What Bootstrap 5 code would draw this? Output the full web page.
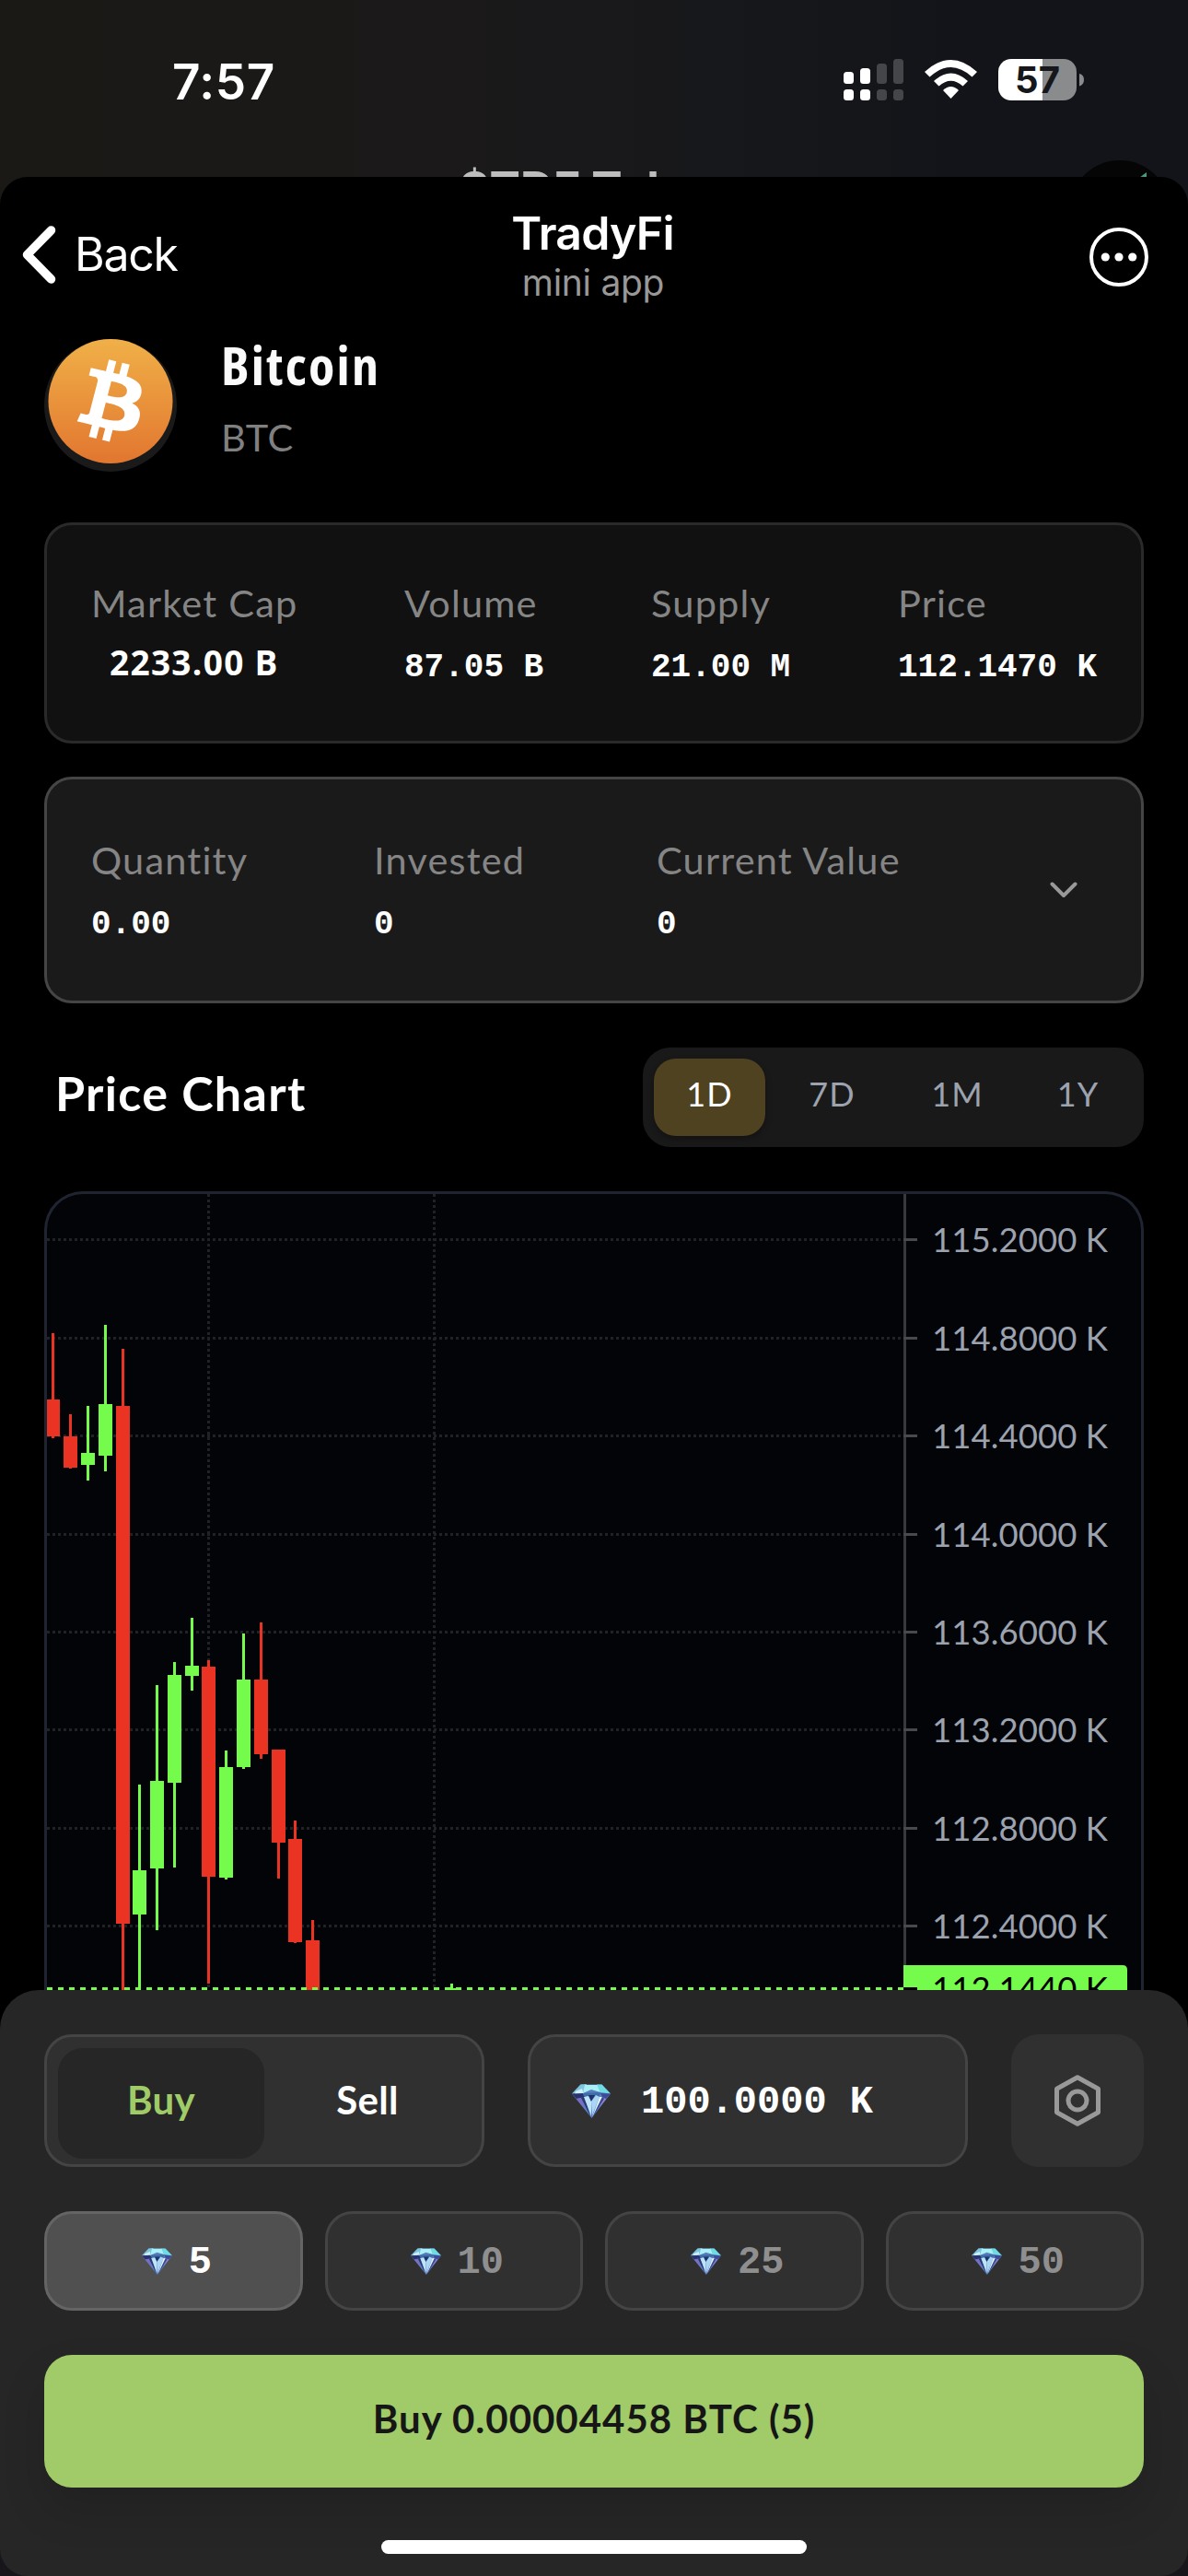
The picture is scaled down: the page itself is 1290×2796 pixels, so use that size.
<!DOCTYPE html>
<html lang="en" data-bs-theme="dark">
<head>
<meta charset="utf-8">
<meta name="viewport" content="width=device-width, initial-scale=1">
<title>TradyFi</title>
<link href="https://cdn.jsdelivr.net/npm/bootstrap@5.3.0/dist/css/bootstrap.min.css" rel="stylesheet">
<style>
  body { width: 1290px; height: 2796px; overflow: hidden; background: #000; color: #fff; font-family: Lato, "Open Sans", sans-serif; }
  svg { display: block; flex: none; }
  .sys { font-family: Inter, "Liberation Sans", sans-serif; }
  .mono { font-family: "Liberation Mono", monospace; font-weight: 700; white-space: pre; }

  .status-area { height: 222px; margin-bottom: -30px; padding: 64px 112px 0 187px; background: linear-gradient(90deg, #1a1916 0, #1b1917 22%, #1b191a 38%, #17181b 60%, #131419 82%, #121419 100%); }
  .clock { font-size: 53px; font-weight: 600; line-height: 52px; letter-spacing: .6px; margin-top: -1px; }
  .chat-peek { top: 181px; left: 0; right: 0; height: 12px; overflow: hidden; font-size: 50px; font-weight: 700; line-height: 46px; color: #bdbdbd; }
  .avatar-peek { left: 1161px; top: 174px; }

  .app-sheet { height: 1968px; background: #000; border-radius: 30px 30px 0 0; padding: 0 48px; }
  .app-header { height: 173px; margin: 0 -48px; }
  .back-btn { padding: 53px 0 0 23px; gap: 20px; width: 400px; font-size: 50px; line-height: 62px; letter-spacing: -1.3px; }
  .app-title { padding-top: 33px; font-size: 50px; font-weight: 600; line-height: 57px; letter-spacing: -.8px; margin-left: -3px; }
  .app-sub { font-size: 39px; line-height: 50px; letter-spacing: -.3px; color: #989898; margin-left: -2px; }
  .more-btn { width: 400px; padding: 55px 43px 0 0; }

  .coin-row { height: 202px; gap: 48px; }
  .coin-name { font-family: "Open Sans", sans-serif; font-stretch: 75%; font-size: 58px; font-weight: 700; line-height: 61px; letter-spacing: 2.2px; color: #fafafa; }
  .caption-lg { font-size: 41.5px; line-height: 52px; letter-spacing: 1.2px; color: #858585; }
  .coin-sym { margin-top: 22px; letter-spacing: .6px; color: #808080; }

  .panel { border: 3px solid #2a2a2a; border-radius: 30px; background: #111; padding: 58px 40px 0 48px; }
  .panel-stats { height: 240px; margin-bottom: 36px; }
  .panel-hold { height: 246px; margin-bottom: 48px; background: #1a1a1a; border-color: #454545; padding-top: 61px; }
  .stat-col { width: 268px; }
  .stat-col.first { width: 340px; }
  .hold-col { width: 307px; }
  .stat-val { font-size: 36px; line-height: 40px; margin-top: 25px; }
  .stat-cap { font-family: "Open Sans", sans-serif; font-size: 37px; font-weight: 700; letter-spacing: 1.3px; margin-top: 19px; padding-left: 20px; }

  .chart-head { height: 108px; margin-bottom: 48px; padding-left: 12px; }
  .chart-title { font-size: 52px; font-weight: 700; line-height: 60px; letter-spacing: 1.3px; margin: 0 0 10px; }
  .range-tabs { width: 544px; height: 108px; padding: 12px; border-radius: 30px; background: #191919; font-size: 36px; letter-spacing: 1px; color: #9ca3af; }
  .range-tab { height: 84px; line-height: 76px; }
  .range-tab.on { background: #4f4220; color: #fff; border-radius: 24px; box-shadow: 0 3px 6px rgba(0,0,0,.3); }

  .chart-box { height: 867px; border: 3px solid #1f2430; border-bottom: 0; border-radius: 42px 42px 0 0; background: #030408; overflow: hidden; }

  .trade-wrap { height: 636px; background: linear-gradient(#000 50%, #18161b 50%); }
  .trade-sheet { height: 636px; background: #262626; border-radius: 42px 42px 30px 30px; padding: 48px 48px 0; }
  .field { height: 144px; border: 3px solid #444; border-radius: 30px; background: #303030; }
  .side-switch { width: 478px; padding: 12px; font-size: 42px; font-weight: 700; margin-right: 47px; }
  .side-opt { height: 120px; line-height: 113px; border-radius: 27px; letter-spacing: .3px; }
  .side-opt.on { background: #262626; color: #a0cc68; }
  .amount { width: 478px; padding-left: 45px; gap: 33px; margin-right: 47px; font-size: 42px; }
  .amount span, .quick span { padding-top: 5px; }
  .gear { width: 144px; border: 0; }
  .quick-row { margin: 48px 0; gap: 24px; }
  .quick { flex: 1 1 0; height: 108px; border: 3px solid #444; border-radius: 30px; background: #303030; color: #8f8f8f; font-size: 42px; gap: 18px; padding-left: 7px; }
  .quick.on { background: #505050; border-color: #646464; color: #fff; }
  .buy-btn { height: 144px; border-radius: 30px; background: #a0cb68; color: #161616; font-size: 42px; font-weight: 700; letter-spacing: 1px; padding-bottom: 6px; box-shadow: 0 24px 48px rgba(0,0,0,.14); }
  .home-bar { width: 462px; height: 15px; border-radius: 8px; background: #fff; margin: 57px auto 0; }
</style>
<script src="https://cdn.jsdelivr.net/npm/bootstrap@5.3.0/dist/js/bootstrap.bundle.min.js"></script>
</head>
<body>

<svg width="0" height="0" class="position-absolute">
  <symbol id="gem" viewBox="0 0 42 37">
    <path d="M9.500 0.500 32.500 0.500 42 10.500 21.500 37 0 10.500Z" fill="#5a7fc0"/>
    <path d="M9.500.5 16 0 14 8 0 10.500Z" fill="#7fc6dc"/>
    <path d="M14 1 28 1 31 9 21 6 12 10Z" fill="#a9f0f5"/>
    <path d="M27 .5 32.500.5 42 10.500 31 9Z" fill="#6fdbe2"/>
    <path d="M4 8 11 5 13 11 3 11Z" fill="#cdeefa"/>
    <path d="M0 10.500 12 10 14 14 5 16Z" fill="#28346f"/>
    <path d="M12 10 31 9 30 13 21 16 13 14Z" fill="#3d6ea8"/>
    <path d="M42 10.500 31 10 33 14 37 16Z" fill="#3c4c98"/>
    <path d="M37 16 32 15 30 25Z" fill="#a77fd8"/>
    <path d="M5 16 10 15 15 28Z" fill="#7d6cc4"/>
    <path d="M10 15 14 13 20 35Z" fill="#263a78"/>
    <path d="M13 14 18 13 21 19 21 35Z" fill="#bfe4f7"/>
    <path d="M18 12 25 12 21 19Z" fill="#1f3268"/>
    <path d="M21 19 26 12 30 14 22 34Z" fill="#a9d6f2"/>
    <path d="M30 14 33 14 22 36Z" fill="#e6f6ff"/>
    <path d="M33 14 35 16 23 35Z" fill="#35498f"/>
  </symbol>
</svg>

<div class="position-relative">
  <div class="status-area sys d-flex justify-content-between align-items-start">
    <div class="clock">7:57</div>
    <svg width="262" height="46" viewBox="0 0 262 46">
      <g fill="#fff">
        <rect x="0" y="14" width="11" height="13" rx="3.500"/><rect x="18" y="10" width="11" height="17" rx="3.500"/>
        <rect x="0" y="33" width="11" height="12" rx="3.500"/><rect x="18" y="33" width="11" height="12" rx="3.500"/>
      </g>
      <g fill="#45464a">
        <rect x="36" y="5" width="11" height="22" rx="3.500"/><rect x="54" y="0" width="11" height="27" rx="3.500"/>
        <rect x="36" y="33" width="11" height="12" rx="3.500"/><rect x="54" y="33" width="11" height="12" rx="3.500"/>
      </g>
      <g transform="translate(88 1)" fill="#fff">
        <path d="M0 13Q28.500-13 57 13L51.500 18.500Q28.500-2.500 5.500 18.500Z"/>
        <path d="M10 23Q28.500 6 47 23L41.500 28.500Q28.500 17 15.500 28.500Z"/>
        <path d="M20 33Q28.500 25 37 33L28.500 42Z"/>
      </g>
      <path d="M182 0H216V45H182A14 14 0 0 1 168 31V14A14 14 0 0 1 182 0Z" fill="#fff"/>
      <path d="M216 0H239A14 14 0 0 1 253 14V31A14 14 0 0 1 239 45H216Z" fill="#8a8b8c"/>
      <path d="M256 16Q261 17 261 22.500T256 29.500Z" fill="#8a8b8c"/>
      <text x="210.500" y="37" text-anchor="middle" font-size="40" font-weight="700" fill="#15171b">57</text>
    </svg>
  </div>
  <div class="chat-peek sys position-absolute text-center">$TDF Token</div>
  <svg class="avatar-peek position-absolute" width="110" height="30" viewBox="0 0 110 30"><circle cx="55" cy="55" r="55" fill="#050505"/><path d="M76 19 84 13V24H72Z" fill="#4a9a7c"/></svg>
</div>

<main class="app-sheet position-relative">
  <header class="app-header sys d-flex justify-content-between align-items-start">
    <div class="back-btn d-flex align-items-start">
      <svg width="38" height="64" viewBox="0 0 38 64"><path d="M32.500 5 6.500 31.500 32.500 58" fill="none" stroke="#fff" stroke-width="9.500" stroke-linecap="round" stroke-linejoin="round"/></svg>
      <span>Back</span>
    </div>
    <div class="text-center">
      <div class="app-title">TradyFi</div>
      <div class="app-sub">mini app</div>
    </div>
    <div class="more-btn d-flex justify-content-end">
      <svg width="64" height="64" viewBox="0 0 64 64"><circle cx="32" cy="32" r="30" fill="none" stroke="#fff" stroke-width="4"/><g fill="#fff"><circle cx="17.300" cy="32" r="4.600"/><circle cx="32" cy="32" r="4.600"/><circle cx="46.700" cy="32" r="4.600"/></g></svg>
    </div>
  </header>

  <section class="coin-row d-flex align-items-start">
    <svg style="margin-top:3px" width="144" height="144" viewBox="0 0 144 144">
      <defs><linearGradient id="btcFill" x1="0" y1="0" x2="0" y2="1"><stop offset="0" stop-color="#f0b048"/><stop offset="1" stop-color="#e2762f"/></linearGradient></defs>
      <circle cx="72" cy="72" r="72" fill="#1a1a1a"/>
      <circle cx="72" cy="67.500" r="67.500" fill="url(#btcFill)"/>
      <g transform="translate(71.200 67) scale(4.650 4.470) translate(-15.800 -16)">
        <path fill="#fff" d="M23.189 14.020c.314-2.096-1.283-3.223-3.465-3.975l.708-2.840-1.728-.430-.690 2.765c-.454-.114-.920-.220-1.385-.326l.695-2.783L15.596 6l-.708 2.839c-.376-.086-.746-.170-1.104-.260l.002-.009-2.384-.595-.460 1.846s1.283.294 1.256.312c.700.175.826.638.805 1.006l-.806 3.235c.048.012.110.030.180.057l-.183-.045-1.130 4.532c-.086.212-.303.531-.793.410.018.025-1.256-.313-1.256-.313l-.858 1.978 2.250.561c.418.105.828.215 1.231.318l-.715 2.872 1.727.430.708-2.840c.472.127.930.245 1.378.357l-.706 2.828 1.728.430.715-2.866c2.948.558 5.164.333 6.097-2.333.752-2.146-.037-3.385-1.588-4.192 1.130-.260 1.980-1.003 2.207-2.538zm-3.950 5.538c-.533 2.147-4.148.986-5.320.695l.950-3.805c1.172.293 4.929.872 4.370 3.110zm.535-5.569c-.487 1.953-3.495.960-4.470.717l.860-3.450c.975.243 4.118.696 3.610 2.733z"/>
      </g>
    </svg>
    <div>
      <div class="coin-name">Bitcoin</div>
      <div class="caption-lg coin-sym">BTC</div>
    </div>
  </section>

  <section class="panel panel-stats d-flex">
    <div class="stat-col first"><div class="caption-lg">Market Cap</div><div class="stat-val stat-cap">2233.00 B</div></div>
    <div class="stat-col"><div class="caption-lg">Volume</div><div class="stat-val mono">87.05 B</div></div>
    <div class="stat-col"><div class="caption-lg">Supply</div><div class="stat-val mono">21.00 M</div></div>
    <div><div class="caption-lg">Price</div><div class="stat-val mono">112.1470 K</div></div>
  </section>

  <section class="panel panel-hold d-flex">
    <div class="hold-col"><div class="caption-lg">Quantity</div><div class="stat-val mono">0.00</div></div>
    <div class="hold-col"><div class="caption-lg">Invested</div><div class="stat-val mono">0</div></div>
    <div class="flex-grow-1"><div class="caption-lg">Current Value</div><div class="stat-val mono">0</div></div>
    <svg style="margin:47px 29px 0 0" width="30" height="24" viewBox="0 0 30 24"><path d="M2.500 5.500 15 18 27.500 5.500" fill="none" stroke="#999" stroke-width="4" stroke-linecap="round" stroke-linejoin="round"/></svg>
  </section>

  <section class="chart-head d-flex justify-content-between align-items-center">
    <h2 class="chart-title">Price Chart</h2>
    <div class="range-tabs d-flex text-center">
      <div class="range-tab on" style="width:121px">1D</div>
      <div class="range-tab" style="width:145px">7D</div>
      <div class="range-tab" style="width:127px">1M</div>
      <div class="range-tab flex-grow-1 ps-2">1Y</div>
    </div>
  </section>

  <section class="chart-box">
    <!-- viewBox keeps the plot in page pixels: x 51-1239, y from 1296 -->
    <svg width="1188" height="864" viewBox="51 1296 1188 864">
      <g id="grid" stroke="#202226" stroke-width="3" stroke-dasharray="3 3"></g>
      <path d="M982.500 1296V2160" stroke="#38393c" stroke-width="3"/>
      <g id="ticks" stroke="#48494c" stroke-width="3"></g>
      <g id="axis" font-family="Lato, sans-serif" font-size="36.500" fill="#9ca3af"></g>
      <g id="candles"></g>
      <path d="M51 2158.500H981" stroke="#75fb4c" stroke-width="3" stroke-dasharray="6 6"/>
      <path d="M981 2133H1219Q1224 2133 1224 2138V2160H981Z" fill="#75fb4c"/>
      <path d="M981 2158.500H996" stroke="#000" stroke-width="3"/>
      <text x="1012" y="2172" font-family="Lato, sans-serif" font-size="36.500" fill="#000" textLength="191">112.1440 K</text>
    </svg>
  </section>
</main>

<div class="trade-wrap">
  <footer class="trade-sheet">
    <div class="d-flex">
      <div class="field side-switch d-flex text-center">
        <div class="side-opt on" style="width:224px">Buy</div>
        <div class="side-opt flex-grow-1">Sell</div>
      </div>
      <div class="field amount mono d-flex align-items-center">
        <svg width="42" height="37"><use href="#gem"/></svg><span>100.0000 K</span>
      </div>
      <div class="field gear d-flex align-items-center justify-content-center">
        <svg width="54" height="60" viewBox="0 0 54 60"><path d="M27 4.800 49.500 17.300V42.700L27 55.200 4.500 42.700V17.300Z" fill="none" stroke="#999" stroke-width="5" stroke-linejoin="round"/><circle cx="27" cy="30" r="10" fill="none" stroke="#999" stroke-width="5"/></svg>
      </div>
    </div>
    <div class="quick-row d-flex">
      <div class="quick on mono d-flex align-items-center justify-content-center"><svg width="33" height="29"><use href="#gem"/></svg><span>5</span></div>
      <div class="quick mono d-flex align-items-center justify-content-center"><svg width="33" height="29"><use href="#gem"/></svg><span>10</span></div>
      <div class="quick mono d-flex align-items-center justify-content-center"><svg width="33" height="29"><use href="#gem"/></svg><span>25</span></div>
      <div class="quick mono d-flex align-items-center justify-content-center"><svg width="33" height="29"><use href="#gem"/></svg><span>50</span></div>
    </div>
    <div class="buy-btn d-flex align-items-center justify-content-center">Buy 0.00004458 BTC (5)</div>
    <div class="home-bar"></div>
  </footer>
</div>

<script>
  const NS = 'http://www.w3.org/2000/svg';
  const add = (id, tag, attrs, text) => {
    const el = document.createElementNS(NS, tag);
    for (const k in attrs) el.setAttribute(k, attrs[k]);
    if (text) el.textContent = text;
    document.getElementById(id).append(el);
  };
  const levels = [[1345.5,'115.2000 K'],[1452.5,'114.8000 K'],[1558.5,'114.4000 K'],[1665.5,'114.0000 K'],[1771.5,'113.6000 K'],[1877.5,'113.2000 K'],[1984.5,'112.8000 K'],[2090.5,'112.4000 K']];
  for (const [y, label] of levels) {
    add('grid', 'path', { d: `M51 ${y}H981` });
    add('ticks', 'path', { d: `M981 ${y}H996` });
    add('axis', 'text', { x: 1012, y: y + 13.5, textLength: 191 }, label);
  }
  for (const x of [226.5, 471.5]) add('grid', 'path', { d: `M${x} 1296V2160` });
  // centre x, wick top, wick bottom, body top, body bottom, rising
  const candles = [[57.5,1447,1561,1519,1559,0],[76.5,1535,1594,1559,1593,0],[95.5,1526,1607,1577,1590,1],[114.5,1438,1597,1524,1580,1],[133.5,1464,2160,1526,2088,0],[151.5,1937,2160,2030,2078,1],[170.5,1829,2095,1933,2028,1],[189.5,1804,2027,1818,1935,1],[208.5,1756,1835,1808,1819,1],[226.5,1802,2153,1809,2037,0],[245.5,1900,2040,1918,2038,1],[264.5,1773,1920,1823,1918,1],[283.5,1761,1909,1823,1904,0],[302.5,1899,2039,1899,2000,0],[320.5,1976,2109,1996,2108,0],[339.5,2084,2160,2106,2160,0],[490.5,2153,2160,2158,2160,1]];
  for (const [x, wt, wb, bt, bb, up] of candles) {
    const fill = up ? '#75fb4c' : '#ea3323';
    add('candles', 'rect', { x: x - 1.5, y: wt, width: 3, height: wb - wt, fill });
    add('candles', 'rect', { x: x - 7.5, y: bt, width: 15, height: bb - bt, fill });
  }
</script>
</body>
</html>
